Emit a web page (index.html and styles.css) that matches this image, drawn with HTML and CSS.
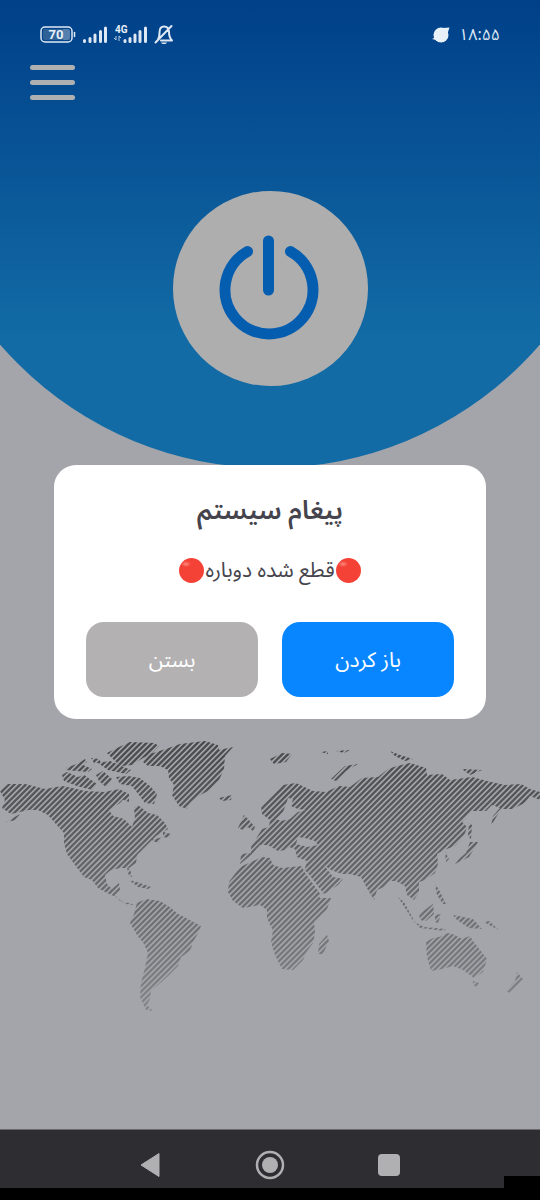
FILE: index.html
```
<!DOCTYPE html>
<html lang="fa">
<head>
  <meta charset="utf-8">
  <meta name="viewport" content="width=device-width, initial-scale=1">
  <title>پیغام سیستم</title>
  <link rel="stylesheet" href="styles.css">
</head>
<body>
  <div class="app">
    <div class="screen">
      <div class="hero">
        <div class="status-bar">
          <div class="status-icons">
            <svg class="battery" viewBox="0 0 36 18">
              <rect x="1" y="1" width="31" height="15" rx="4" fill="none" stroke="#dfe9f4" stroke-width="1.5"/>
              <rect x="3" y="3" width="20" height="11" rx="2" fill="#2e6297"/>
              <rect x="22" y="3" width="8" height="11" rx="2" fill="#5580ae"/>
              <path d="M34.500 6.500v4" stroke="#dfe9f4" stroke-width="1.500" stroke-linecap="round"/>
              <text x="16" y="13" class="battery-text">70</text>
            </svg>
            <svg class="signal" viewBox="0 0 26 18">
              <path d="M2.500 14.500v1M8 12.500v3M13 9v6.500M18.500 5.500v10M23.500 2v13.500" class="bars"/>
            </svg>
            <svg class="signal-4g" viewBox="0 0 34 20">
              <text x="1" y="8" class="network-text">4G</text>
              <path d="M2 11v4M0 13l2 2M5 16v-5l2 2" fill="none" stroke="#b6cbe2" stroke-width="1"/>
              <path d="M11 15.500v1M16 13.500v3M21 10v6.500M26 6.500v10M31.500 3v13.500" class="bars"/>
            </svg>
            <svg class="bell" viewBox="0 0 20 22">
              <path d="M4 15.500c1.500-2 1.500-4 1.500-7C5.500 4.500 7 2.500 10 2.500s5 2 5 5.500c0 4 .5 6 3 8.500H7M1.500 18.500l16-16.500" fill="none" stroke="#dfe9f4" stroke-width="2" stroke-linecap="round" stroke-linejoin="round"/>
              <path d="M7 18.500h6c-1 2-5 2-6 0z" fill="#dfe9f4"/>
            </svg>
          </div>
          <div class="status-time">
            <svg class="planet" viewBox="0 0 20 18">
              <circle cx="10" cy="9" r="7.500" fill="#e8f0f8"/>
              <path d="M12 2l6.500-.5-2 6zM7 14.500l-6-1.500 3-1.500z" fill="#e8f0f8"/>
            </svg>
            <span>۱۸:۵۵</span>
          </div>
        </div>

        <button class="menu-btn" aria-label="منو">
          <span></span>
          <span></span>
          <span></span>
        </button>

        <button class="power-btn" aria-label="اتصال">
          <svg viewBox="0 0 195 195">
            <path d="M74.500 60.500A44 44 0 1 0 117.500 60.500" fill="none" stroke="#055db0" stroke-width="11" stroke-linecap="round"/>
            <path d="M95.500 50v49" stroke="#055db0" stroke-width="11" stroke-linecap="round"/>
          </svg>
        </button>
      </div>

      <svg class="world-map" viewBox="0 730 540 290">
        <defs>
          <linearGradient id="fade" gradientUnits="userSpaceOnUse" x1="0" y1="740" x2="0" y2="1015">
            <stop offset="0" stop-color="#fff"/>
            <stop offset="1" stop-color="#555"/>
          </linearGradient>
          <mask id="fadeMask" maskUnits="userSpaceOnUse" x="0" y="730" width="540" height="290">
            <rect x="0" y="730" width="540" height="290" fill="url(#fade)"/>
          </mask>
          <clipPath id="land">
            <!-- North America -->
            <path d="M0 791L8 784 25 784 45 789 62 786 72 788 85 791 104 792 120 789 127 795 120 803 109 810 113 816 124 819 132 827 135 818 134 808 138 805 148 813 157 815 165 823 168 829 156 836 147 845 137 855 136 863 129 868 120 868 111 870 105 875 107 884 112 889 119 883 120 890 115 895 121 902 130 903 134 905 126 904 116 897 107 893 98 888 92 880 84 877 75 865 67 854 64 843 64 833 55 823 48 815 38 810 28 810 20 812 11 814 2 808 5 800z"/>
            <path d="M62 775L67 772 78 777 84 775 97 784 92 790 77 786 64 781zM66 768L79 763 92 769 88 772 66 770zM96 775L103 771 112 779 106 787 99 781zM107 753L117 748 130 742 154 743 159 746 151 754 143 758 132 765 120 766 114 760zM98 763L110 761 131 770 126 774 108 770zM116 777L128 776 140 778 151 787 157 794 154 804 145 803 139 795 132 786 120 784zM121 790l8 4 0 8-8-3zM79 763l6-4 2 3-6 3zM91 758l8 1 2 4-7 0zM151 840l12-3-5 6zM163 832l8 2-2 4-6-1z"/>
            <!-- Caribbean -->
            <path d="M127 868l3 1 2 8-3-1zM129 880l8 2 14 5-3 2-10-2z"/>
            <!-- Greenland -->
            <path d="M143 762L150 754 166 749 180 744 205 741 218 745 219 750 233 747 225 756 224 769 219 780 210 790 200 795 190 803 187 809 179 806 172 795 174 785 169 778 168 770 160 766 148 766z"/>
            <path d="M219 798l13-3-1 5-9 1z"/>
            <!-- South America -->
            <path d="M137 903L146 899 160 901 171 908 178 914 186 918 201 926 197 935 193 942 190 951 181 957 178 966 168 976 157 986 151 991 150 999 147 1005 153 1011 146 1010 140 997 141 983 145 968 148 953 144 944 137 935 130 923 134 914z"/>
            <!-- Europe and Asia -->
            <path d="M240 864L241 854 251 853 251 847 262 829 269 827 270 820 262 814 261 806 272 796 283 785 296 783 313 791 326 792 339 786 350 787 362 778 378 777 388 769 397 766 410 763 426 768 427 775 442 774 450 780 472 777 491 782 505 785 521 784 530 789 540 792 540 800 530 796 525 803 512 809 501 809 491 826 493 816 500 808 492 805 486 811 471 811 462 822 467 827 464 836 455 846 444 850 437 854 438 864 435 873 425 880 419 882 419 892 414 900 407 895 405 886 396 881 389 881 384 887 377 890 374 900 368 890 361 877 350 874 342 874 331 870 324 865 333 877 343 879 338 885 326 893 318 896 312 886 304 872 307 861 297 857 295 849 289 847 286 850 278 851 268 845 260 845 250 856z"/>
            <path d="M238 828l6-13 4 4 7 8-2 4-5-4-5 3zM270 759l12-6 10 1-6 8-12 2zM331 779l14-13 13-2-12 7-10 10zM321 752l7-1 0 3zM336 751l14-1-6 3zM390 751l10 4 13 4-8 2-10-5zM462 769l20 1-12 5z"/>
            <!-- Africa -->
            <path d="M240 867L262 857 270 858 273 865 282 868 301 866 308 877 320 898 331 898 327 909 314 922 315 933 313 943 307 951 303 960 293 970 282 969 275 955 271 942 273 931 267 918 267 910 260 905 243 908 233 901 228 892 229 882z"/>
            <path d="M319 944l8-9 2 6-6 13-5 0z"/>
            <!-- Japan and South-East Asia -->
            <path d="M469 823l3 2-1 14-3-3zM470 842l8 0-9 15-14 7 5-6 6-5zM445 852l4 7-3 3zM398 897l6 5 11 20 9 5 22 2-2 2-24-3-8-9zM419 914l14-10 1 10-8 7-6-1zM435 915l6-1-3 9-3-1zM435 885l3 3 8 16-3 0-6-9zM453 915l20 4 9 10-13-1-12-8zM484 922l5-1 10 9-8-4z"/>
            <!-- Australia and New Zealand -->
            <path d="M426 942L433 938 439 937 448 933 455 935 462 939 470 936 473 941 487 959 483 972 474 978 463 970 453 966 442 969 431 971 427 957z"/>
            <path d="M473 981l6 2-2 4-4-2zM517 972l6 7-13 14-4-2 9-10zM6 822l14-8-4 6z"/>
          </clipPath>
        </defs>
        <!-- one very wide dashed line gives the diagonal hatching -->
        <g mask="url(#fadeMask)">
          <g clip-path="url(#land)">
            <path d="M0 605L540 1145" stroke="#48494b" stroke-width="800" stroke-dasharray="2.300 1.700"/>
          </g>
        </g>
        <!-- seas inside the continents -->
        <path fill="#a4a5ab" d="M283 812l3-8 2-6 5 1-2 7 7 3 8 1-8 2-8 7-9 2-5-2zM296 844l2-7 7 1 10 3 3 4-10 2zM303 870l4 2 17 22-3 1z"/>
      </svg>

      <div class="dialog" role="dialog" aria-labelledby="dialogTitle" dir="rtl">
        <h1 class="dialog-title" id="dialogTitle">پیغام سیستم</h1>
        <p class="dialog-text"><span class="red-dot"></span>قطع شده دوباره<span class="red-dot"></span></p>
        <div class="dialog-actions">
          <button class="btn btn-open">باز کردن</button>
          <button class="btn btn-close">بستن</button>
        </div>
      </div>
    </div>

    <nav class="nav-bar">
      <button aria-label="بازگشت"><svg viewBox="0 0 30 30"><path d="M5 15L23 3.500v23z" fill="#b0b0b2" stroke="#b0b0b2" stroke-linejoin="round"/></svg></button>
      <button aria-label="خانه"><svg viewBox="0 0 30 30"><circle cx="15" cy="15" r="13" fill="none" stroke="#b0b0b2" stroke-width="2.500"/><circle cx="15" cy="15" r="8" fill="#b0b0b2"/></svg></button>
      <button aria-label="برنامه‌های اخیر"><svg viewBox="0 0 30 30"><rect x="4" y="4" width="22" height="22" rx="4" fill="#b0b0b2"/></svg></button>
    </nav>
    <div class="bottom-edge"></div>
  </div>
</body>
</html>
```
FILE: styles.css
```
* {
  margin: 0;
  padding: 0;
  box-sizing: border-box;
}

body {
  font-family: "Noto Sans Arabic", "Noto Naskh Arabic", "Noto Sans", "DejaVu Sans", sans-serif;
  background: #000;
}

button {
  border: none;
  background: none;
  font-family: inherit;
  cursor: pointer;
}

svg {
  display: block;
}

.app {
  min-height: 100vh;
  display: flex;
  flex-direction: column;
}

.screen {
  flex: 1;
  position: relative;
  display: flex;
  flex-direction: column;
  background: #a4a5ab;
  border-bottom: 1px solid #68686d;
}

.hero {
  height: 468px;
  display: flex;
  flex-direction: column;
  background: linear-gradient(#004089, #126ba5 72%);
  clip-path: ellipse(66% 356px at 50% 112px);
}

.status-bar {
  height: 65px;
  padding: 4px 40px 0;
  display: flex;
  align-items: center;
  justify-content: space-between;
}

.status-icons {
  display: flex;
  align-items: center;
  gap: 6px;
}

.battery {
  width: 36px;
  height: 18px;
}

.battery-text {
  font: bold 13px Roboto, sans-serif;
  fill: #e8f0f8;
  text-anchor: middle;
}

.signal {
  width: 26px;
  height: 18px;
}

.signal-4g {
  width: 34px;
  height: 20px;
}

.network-text {
  font: bold 10px Roboto, sans-serif;
  fill: #e8f0f8;
}

.bars {
  stroke: #dfe9f4;
  stroke-width: 3;
  stroke-linecap: round;
}

.bell {
  width: 20px;
  height: 22px;
}

.status-time {
  display: flex;
  align-items: center;
  gap: 8px;
  color: #dfe9f4;
  font-size: 16px;
}

.planet {
  width: 20px;
  height: 18px;
}

.menu-btn {
  width: 45px;
  margin-left: 30px;
  display: flex;
  flex-direction: column;
  gap: 10px;
}

.menu-btn span {
  width: 100%;
  height: 5px;
  border-radius: 3px;
  background: #aeb0b1;
}

.power-btn {
  width: 195px;
  height: 195px;
  margin: 91px auto 0;
  border-radius: 50%;
  background: #aeaeae;
}

.world-map {
  width: 100%;
  margin-top: 262px;
}

.dialog {
  position: absolute;
  top: 465px;
  left: 10%;
  right: 10%;
  padding: 24px 32px 22px;
  border-radius: 22px;
  background: #fff;
  color: #45444c;
  text-align: center;
}

.dialog-title {
  font-size: 26px;
  line-height: 44px;
  font-weight: 600;
}

.dialog-text {
  height: 32px;
  margin-top: 21px;
  display: flex;
  align-items: center;
  justify-content: center;
  gap: 1px;
  font-size: 21px;
}

.red-dot {
  width: 25px;
  height: 25px;
  border-radius: 50%;
  background: radial-gradient(ellipse 5px 3px at 7px 6px, #ff8a80, #f44336);
}

.dialog-actions {
  margin-top: 36px;
  display: grid;
  grid-template-columns: 1fr 1fr;
  gap: 24px;
}

.btn {
  height: 75px;
  border-radius: 18px;
  color: #fff;
  font-size: 21px;
}

.btn-open {
  background: #0886ff;
}

.btn-close {
  background: #b3b1b2;
}

.nav-bar {
  height: 58px;
  padding: 11px 92px 0;
  display: flex;
  justify-content: space-around;
  align-items: center;
  background: #2e2d31;
}

.nav-bar svg {
  width: 30px;
  height: 30px;
}

.bottom-edge {
  position: relative;
  height: 12px;
  background: #000;
}

.bottom-edge::before {
  content: "";
  position: absolute;
  right: 0;
  bottom: 100%;
  width: 36px;
  height: 12px;
  background: #000;
}
```
